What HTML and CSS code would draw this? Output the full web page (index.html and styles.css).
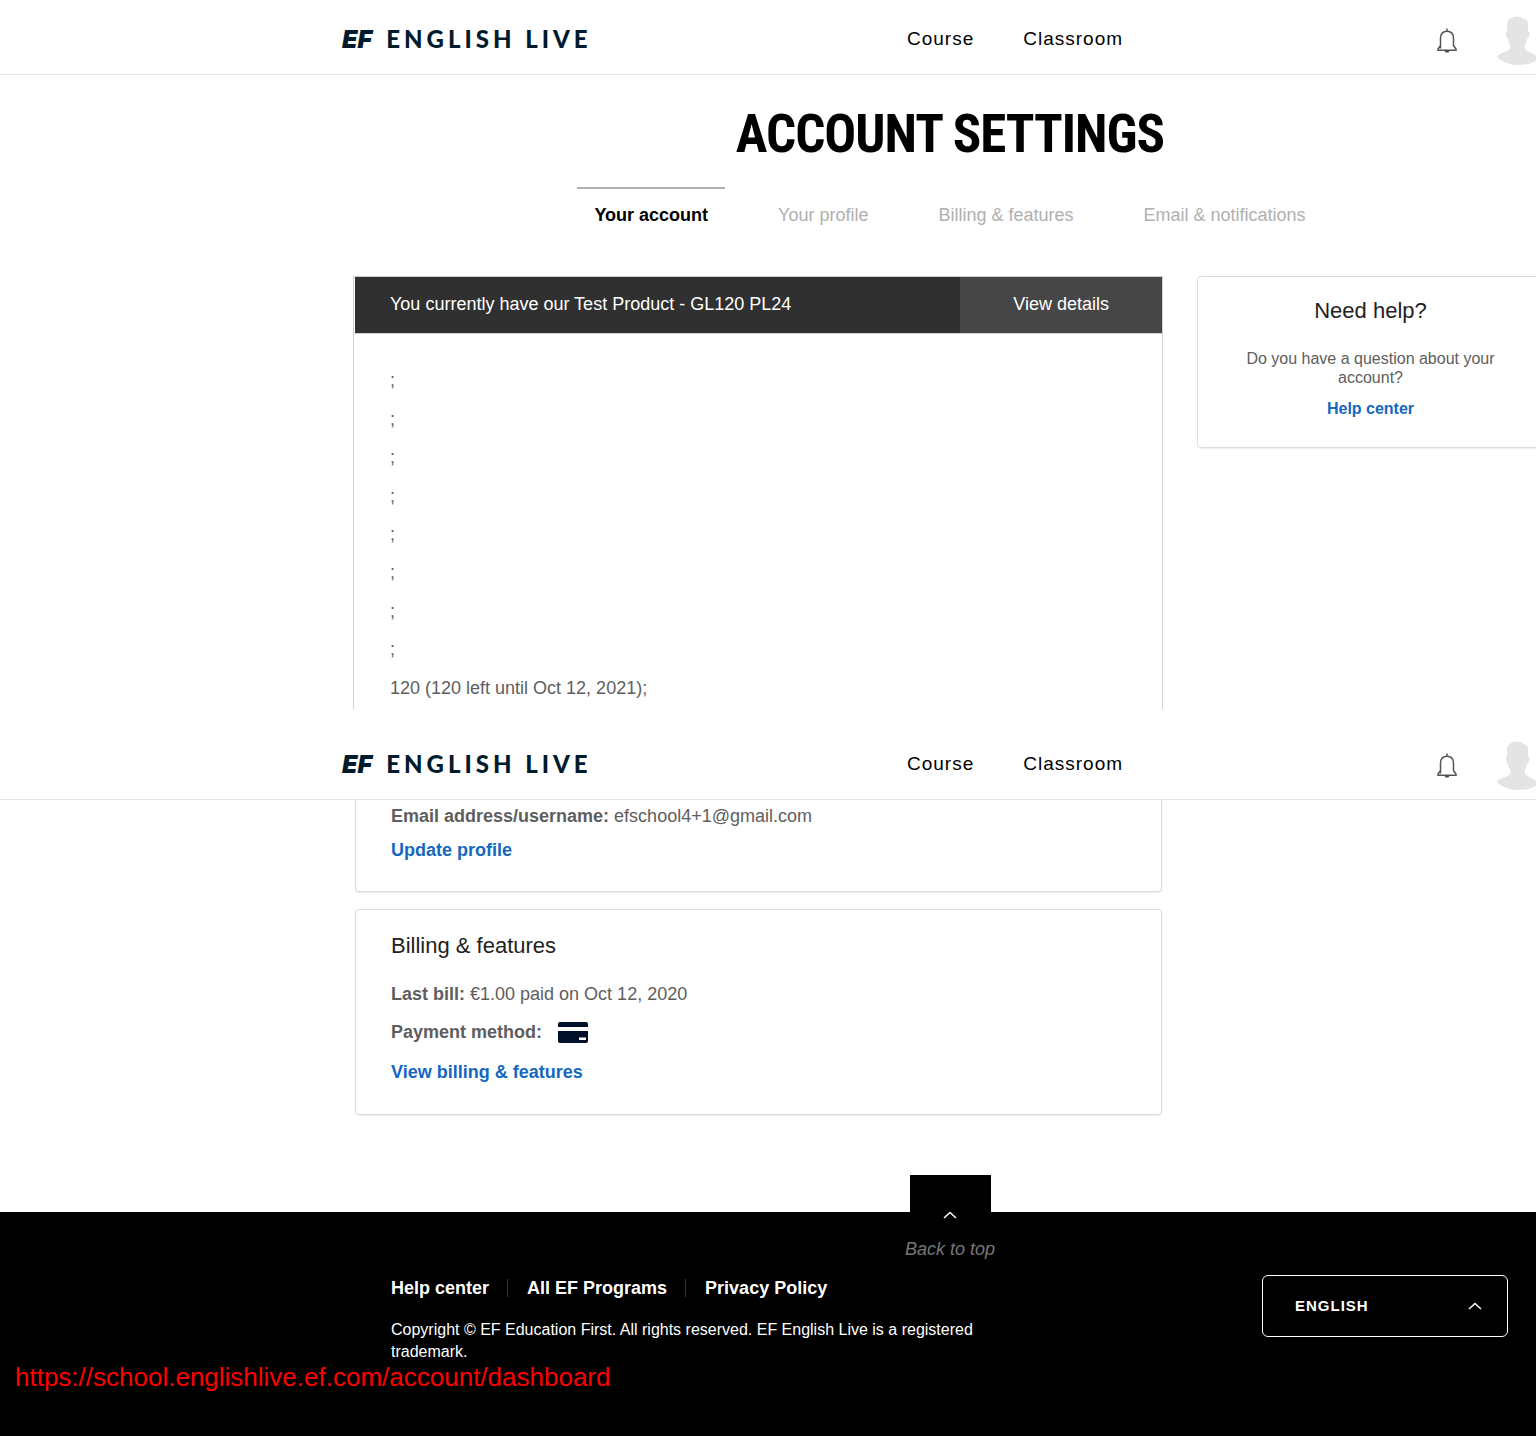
FILE: index.html
```html
<!DOCTYPE html>
<html lang="en">
<head>
<meta charset="utf-8">
<title>Account settings - EF English Live</title>
<link rel="stylesheet" href="styles.css">
</head>
<body>
<svg class="sprite" aria-hidden="true">
  <symbol id="bell" viewBox="0 0 20 26">
    <path d="M10 .5v3M3.500 20.500V10.500C3.500 6 6 3.200 10 3.200S16.500 6 16.500 10.500V17.500L19 21V22.200H1V21L3.500 17.500" fill="none" stroke="#555" stroke-width="1.500"/>
    <path d="M7.500 22.500H12.500L11.500 24.500H8.500Z" fill="#444"/>
  </symbol>
  <symbol id="avatar" viewBox="0 0 40 50">
    <path d="M11 9C11 4 15 .8 21 .6C24 .5 26 2 28 3.200C31 3.300 32.200 5 32.200 9L32 15.500C34 15.500 33.800 19 32.500 21.500C31.800 23 31 23 30.800 23.200C30.500 27 29 28 28.500 30C28.500 35 34 36 41 40V44C35 48 28 49 22 49C13 49 6 46 .7 40.500C6 35.500 14 36 14.500 31C14.700 28 12.500 27 12.300 23.200C11 23 10 20 9.800 17.500C9.800 16 10.500 15.500 11.300 15.700Z" fill="#e4e4e4"/>
  </symbol>
  <symbol id="chevron" viewBox="0 0 14 8">
    <path d="M1 7L7 1.500L13 7" fill="none" stroke="#fff" stroke-width="1.500"/>
  </symbol>
</svg>

<section class="view view-top">
  <header class="topbar">
    <a class="logo" href="#"><span class="logo-mark">EF</span><span class="logo-name">ENGLISH LIVE</span></a>
    <nav class="nav"><a href="#">Course</a><a href="#">Classroom</a></nav>
    <div class="tools">
      <button class="icon-button" aria-label="Notifications"><svg class="bell"><use href="#bell"/></svg></button>
      <button class="icon-button" aria-label="Profile"><svg class="avatar"><use href="#avatar"/></svg></button>
    </div>
  </header>
  <div class="container">
    <h1>ACCOUNT SETTINGS</h1>
    <nav class="tabs">
      <a class="tab active" href="#">Your account</a>
      <a class="tab" href="#">Your profile</a>
      <a class="tab" href="#">Billing &amp; features</a>
      <a class="tab" href="#">Email &amp; notifications</a>
    </nav>
    <div class="columns">
      <main class="panel">
        <div class="product">
          <p>You currently have our Test Product - GL120 PL24</p>
          <a href="#">View details</a>
        </div>
        <ul class="features">
          <li>;</li><li>;</li><li>;</li><li>;</li><li>;</li><li>;</li><li>;</li><li>;</li>
          <li>120 (120 left until Oct 12, 2021);</li>
        </ul>
      </main>
      <aside class="card help">
        <h2>Need help?</h2>
        <p>Do you have a question about your account?</p>
        <a class="link" href="#">Help center</a>
      </aside>
    </div>
  </div>
</section>

<section class="view">
  <header class="topbar">
    <a class="logo" href="#"><span class="logo-mark">EF</span><span class="logo-name">ENGLISH LIVE</span></a>
    <nav class="nav"><a href="#">Course</a><a href="#">Classroom</a></nav>
    <div class="tools">
      <button class="icon-button" aria-label="Notifications"><svg class="bell"><use href="#bell"/></svg></button>
      <button class="icon-button" aria-label="Profile"><svg class="avatar"><use href="#avatar"/></svg></button>
    </div>
  </header>
  <div class="container stack">
    <div class="card profile">
      <p><strong>Email address/username:</strong> efschool4+1@gmail.com</p>
      <a class="link" href="#">Update profile</a>
    </div>
    <div class="card billing">
      <h2>Billing &amp; features</h2>
      <p><strong>Last bill:</strong> €1.00 paid on Oct 12, 2020</p>
      <p class="method"><strong>Payment method:</strong>
        <svg class="credit" viewBox="0 0 30 21" role="img" aria-label="Credit card"><path d="M2 0H28Q30 0 30 2V5H0V2Q0 0 2 0ZM0 9H30V19Q30 21 28 21H2Q0 21 0 19Z" fill="#001029"/><path d="M21 15.500H28V18H21Z" fill="#fff"/></svg>
      </p>
      <a class="link" href="#">View billing &amp; features</a>
    </div>
  </div>
</section>

<footer class="footer">
  <div class="container">
    <a class="to-top" href="#"><span class="to-top-tab"><svg class="chevron"><use href="#chevron"/></svg></span><em>Back to top</em></a>
    <div class="footer-row">
      <div class="legal">
        <ul class="footer-links">
          <li><a href="#">Help center</a></li>
          <li><a href="#">All EF Programs</a></li>
          <li><a href="#">Privacy Policy</a></li>
        </ul>
        <p>Copyright © EF Education First. All rights reserved. EF English Live is a registered trademark.</p>
      </div>
      <button class="language">ENGLISH<svg class="chevron"><use href="#chevron"/></svg></button>
    </div>
  </div>
  <p class="address">https://school.englishlive.ef.com/account/dashboard</p>
</footer>
</body>
</html>
```
FILE: styles.css
```css
* { box-sizing: border-box; }

body {
  margin: 0;
  overflow-x: hidden;
  background: #fff;
  color: #5e5e5e;
  font: 18px/22px "Liberation Sans", Arial, sans-serif;
}

h1, h2, p, ul { margin: 0; padding: 0; font-weight: 400; }
ul { list-style: none; }
a { text-decoration: none; color: inherit; }
button { font: inherit; background: none; border: 0; padding: 0; }
svg { display: block; }
.sprite { position: absolute; width: 0; height: 0; }

.container { width: 1194px; margin-left: 353px; }
.view-top { margin-bottom: 16px; }

/* Top bar */
.topbar {
  display: grid;
  grid-template-columns: 565px 1fr auto;
  align-items: center;
  height: 75px;
  padding-left: 342px;
  border-bottom: 1px solid #e5e5e5;
}
.logo { display: flex; align-items: center; gap: 14px; padding-top: 4px; color: #001b2b; line-height: 30px; }
.logo-mark { font-family: Inter, sans-serif; font-size: 25px; font-weight: 900; font-style: italic; }
.logo-name { font-family: Lato, sans-serif; font-size: 24px; font-weight: 900; letter-spacing: 4px; white-space: nowrap; }
.nav { display: flex; gap: 49px; padding-top: 4px; color: #000; font-size: 19px; letter-spacing: 1px; }
.tools { display: flex; align-items: center; gap: 39px; padding-top: 8px; }
.bell { width: 20px; height: 26px; }
.avatar { width: 40px; height: 50px; }

/* Title and tabs */
h1 {
  padding-top: 27px;
  color: #000;
  text-align: center;
  font: 700 53px/64px "Roboto Condensed", "Liberation Sans Narrow", Roboto, sans-serif;
  letter-spacing: -1px;
}
.tabs { display: flex; justify-content: center; gap: 36px; padding: 21px 0 34px; }
.tab { padding: 15px 17px 16px; border-top: 2px solid transparent; color: #b0b0b0; }
.tab.active { border-color: #b0b0b0; color: #000; font-weight: 700; }

/* Account columns */
.columns { display: grid; grid-template-columns: 810px 347px; gap: 34px; align-items: start; }
.panel { border: 1px solid #d0d0d0; border-bottom: 0; }
.product { display: grid; grid-template-columns: 3fr 1fr; padding-left: 1px; border-bottom: 1px solid #d0d0d0; color: #fff; line-height: 54px; }
.product p { padding: 0 0 2px 35px; background: #303030; }
.product a { padding-bottom: 2px; background: #464646; text-align: center; }
.features { display: grid; grid-auto-rows: 1fr; align-items: center; height: 375px; padding: 27px 36px 2px; }

/* Cards */
.card { padding: 0 35px; border: 1px solid #dcdcdc; border-radius: 4px; box-shadow: 0 1px 1px #eee; }
.card h2 { color: #222; font-size: 22px; line-height: 26px; }
.link { color: #1668bf; font-weight: 700; }
.help { padding: 21px 35px 29px; text-align: center; font-size: 16px; line-height: 19px; }
.help p { margin: 25px 0 12px; }
.stack { display: grid; gap: 17px; width: 809px; padding: 0 0 97px 2px; }
.profile { padding-top: 5px; padding-bottom: 30px; border-top: 0; border-radius: 0 0 4px 4px; }
.profile p { margin-bottom: 12px; }
.billing { padding-top: 23px; padding-bottom: 31px; }
.billing h2 { margin-bottom: 24px; }
.method { display: flex; align-items: center; gap: 16px; margin: 16px 0 18px; }
.credit { width: 30px; height: 21px; }

/* Footer */
.footer { position: relative; min-height: 224px; background: #000; color: #fff; }
.to-top { display: flex; flex-direction: column; align-items: center; color: #777; }
.to-top-tab { display: flex; align-items: flex-end; justify-content: center; width: 81px; height: 44px; margin-top: -37px; background: #000; }
.to-top em { margin: 19px 0 15px; }
.footer-row { display: flex; justify-content: space-between; align-items: flex-start; padding: 0 39px 0 38px; }
.legal { width: 610px; font-size: 16px; }
.footer-links { display: flex; margin: 4px 0 22px; font-size: 18px; line-height: 18px; font-weight: 700; }
.footer-links li + li { margin-left: 18px; padding-left: 19px; border-left: 1px solid #333; }
.chevron { width: 14px; height: 8px; }
.language {
  display: flex;
  justify-content: space-between;
  align-items: center;
  width: 246px;
  height: 62px;
  padding: 0 25px 0 32px;
  border: 1px solid #fff;
  border-radius: 6px;
  color: #fff;
  font-size: 15px;
  font-weight: 700;
  letter-spacing: 1px;
}
.address { position: absolute; left: 15px; top: 150px; color: #f00; font-size: 26px; line-height: 30px; }
```
